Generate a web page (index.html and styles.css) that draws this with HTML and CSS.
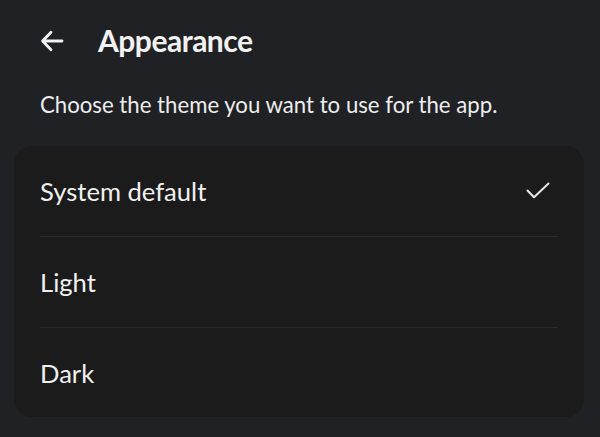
FILE: index.html
```html
<!DOCTYPE html>
<html>
<head>
<meta charset="utf-8">
<link rel="stylesheet" href="styles.css">
</head>
<body>
<div class="page">
  <header class="header">
    <svg class="back" width="24" height="24" viewBox="0 0 24 24" fill="none" stroke="#f2f2f2" stroke-width="2.8" stroke-linecap="round" stroke-linejoin="round">
      <path d="M22 12H2.6M11 3.2L2.6 12l8.4 8.8"/>
    </svg>
    <h1 class="title">Appearance</h1>
  </header>
  <p class="subtitle">Choose the theme you want to use for the app.</p>
  <div class="card">
    <div class="row">
      <span class="label">System default</span>
      <svg class="check" width="24" height="18" viewBox="0 0 24 18" fill="none" stroke="#e6e6e6" stroke-width="2" stroke-linecap="round" stroke-linejoin="round">
        <path d="M1.5 8.5l6.5 6.8L22.5 1.5"/>
      </svg>
    </div>
    <div class="row">
      <span class="label">Light</span>
    </div>
    <div class="row">
      <span class="label">Dark</span>
    </div>
  </div>
</div>
</body>
</html>
```
FILE: styles.css
```css
html, body {
  margin: 0;
  padding: 0;
  background: #202124;
}
.page {
  width: 600px;
  height: 437px;
  font-family: Lato, "Open Sans", sans-serif;
  color: #f2f2f2;
  display: flex;
  flex-direction: column;
}
.header {
  display: flex;
  align-items: center;
  height: 82px;
  padding-left: 40px;
}
.back {
  width: 24px;
  height: 24px;
  margin-right: 34px;
  margin-top: -1px;
}
.title {
  margin: 0;
  font-size: 30px;
  font-weight: 700;
  letter-spacing: -0.5px;
  margin-top: -2px;
}
.subtitle {
  margin: 0;
  padding-left: 40px;
  font-size: 22.2px;
  line-height: 46px;
  color: #ededed;
}
.card {
  margin: 18px 16px 0 14px;
  background: #1b1b1b;
  border-radius: 18px;
  padding: 0 26px;
  display: flex;
  flex-direction: column;
}
.row {
  height: 90px;
  display: flex;
  align-items: center;
  justify-content: space-between;
  border-bottom: 1px solid #2a2a2a;
}
.row:last-child {
  border-bottom: none;
  height: 89px;
}
.label {
  font-size: 25.6px;
  color: #f0f0f0;
}
.check {
  margin-right: 8px;
}
```
